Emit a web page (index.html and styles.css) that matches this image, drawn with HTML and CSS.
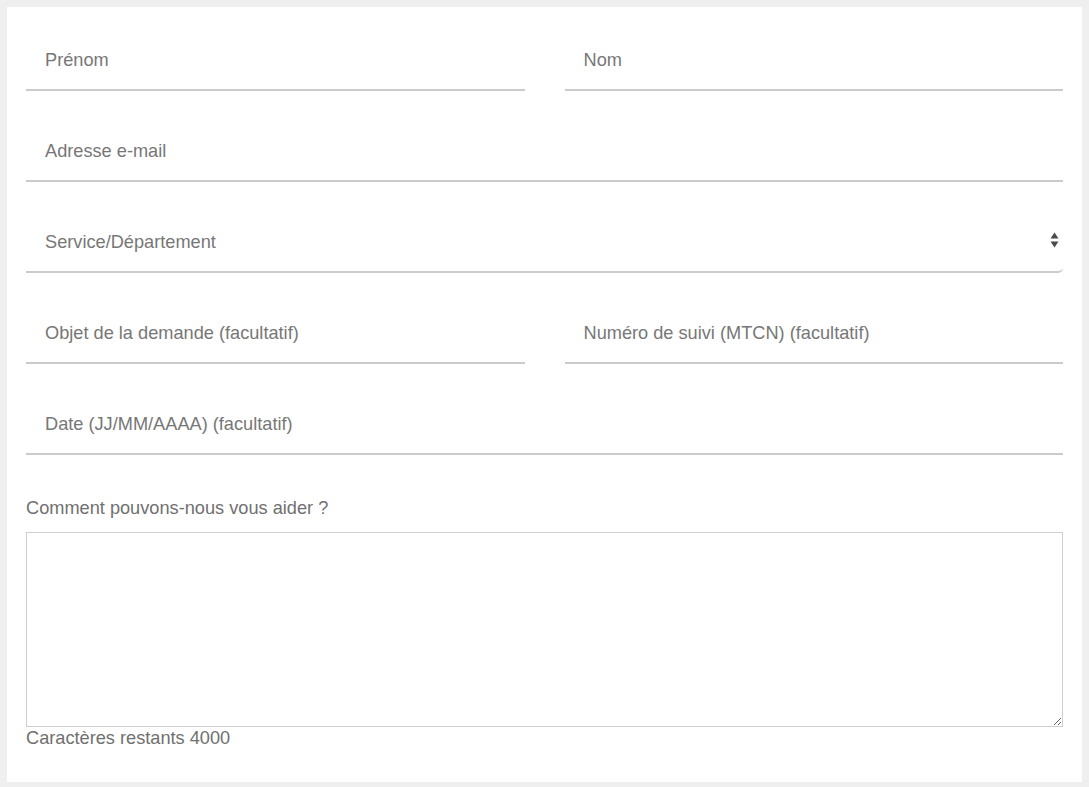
FILE: index.html
```html
<!DOCTYPE html>
<html>

<head>
    <meta charset="utf-8">
    <title>Contact</title>
    <link rel="stylesheet" href="styles.css">
</head>

<body>
    <div class="panel">
        <form class="contact">
            <div class="row">
                <input class="field" type="text" placeholder="Prénom">
                <input class="field" type="text" placeholder="Nom">
            </div>
            <div class="row">
                <input class="field" type="email" placeholder="Adresse e-mail">
            </div>
            <div class="row">
                <div class="select-wrap">
                    <div class="field select">Service/Département</div>
                    <svg class="arrows" width="9" height="16" viewBox="0 0 9 16">
                        <path d="M4.5 0.5 L8.5 6.5 L0.5 6.5 Z" fill="#4a4a4a"/>
                        <path d="M4.5 15.5 L8.5 9.5 L0.5 9.5 Z" fill="#4a4a4a"/>
                    </svg>
                </div>
            </div>
            <div class="row">
                <input class="field" type="text" placeholder="Objet de la demande (facultatif)">
                <input class="field" type="text" placeholder="Numéro de suivi (MTCN) (facultatif)">
            </div>
            <div class="row">
                <input class="field" type="text" placeholder="Date (JJ/MM/AAAA) (facultatif)">
            </div>
            <label class="label" for="msg">Comment pouvons-nous vous aider ?</label>
            <textarea class="message" id="msg"></textarea>
            <div class="counter">Caractères restants 4000</div>
        </form>
    </div>
</body>

</html>
```

FILE: styles.css
```css
* {
    margin: 0;
    padding: 0;
    box-sizing: border-box;
}

body {
    background-color: #efefef;
    padding: 7px;
    font-family: "Liberation Sans", Arial, sans-serif;
    font-size: 18.2px;
    color: #777;
}

.panel {
    background-color: #fff;
    width: 1075px;
    height: 775px;
    padding: 22px 19px 0 19px;
}

.row {
    display: flex;
    gap: 40px;
    margin-bottom: 29px;
}

.field {
    flex: 1;
    height: 62px;
    border: none;
    border-bottom: 2px solid #cbcbcb;
    padding: 3px 19px 0 19px;
    font-family: "Liberation Sans", Arial, sans-serif;
    font-size: 18.2px;
    color: #777;
    background: #fff;
    outline: none;
}

.field::placeholder {
    color: #777;
    opacity: 1;
}

.select-wrap {
    flex: 1;
    position: relative;
    display: flex;
}

.select {
    display: flex;
    align-items: center;
    border-bottom-right-radius: 5px;
}

.arrows {
    position: absolute;
    right: 4px;
    top: 21px;
}

.label {
    display: block;
    line-height: 20px;
    padding-top: 14px;
    color: #707070;
}

.message {
    display: block;
    width: 100%;
    height: 195px;
    margin-top: 14px;
    border: 1px solid #cfcfcf;
    resize: vertical;
    outline: none;
}

.counter {
    line-height: 20px;
    margin-top: 1px;
    color: #707070;
}
```
